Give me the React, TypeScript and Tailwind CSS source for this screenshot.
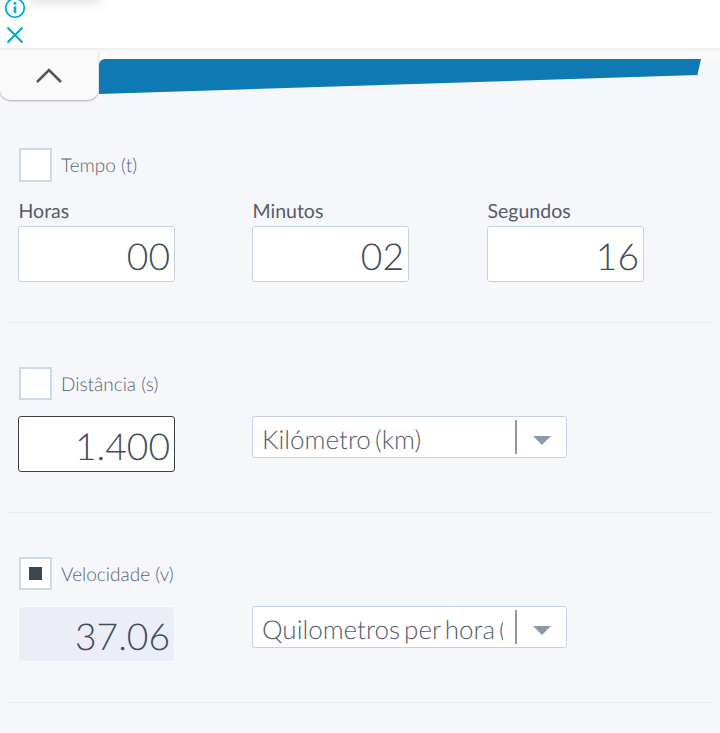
const FONT = "font-['Lato','Open_Sans',sans-serif] [text-rendering:geometricPrecision]";

const Check = ({ label, checked, className }: { label: string; checked?: boolean; className?: string }) => (
  <div className={`flex items-center ml-[19px] ${className}`}>
    <div className="w-[33px] h-full border-2 border-[#ced9e8] bg-white flex items-center justify-center">
      {checked && <div className="w-[13px] h-[13px] bg-[#3e4654]" />}
    </div>
    <span className="ml-[9px] pt-[3px] text-[19px] font-light text-[#5a6270]">{label}</span>
  </div>
);

const NumberBox = ({ value, className }: { value: string; className?: string }) => (
  <div
    className={`w-[157px] h-[56px] rounded-[3px] border flex items-center justify-end pt-[3px] pr-[4px] text-[37.2px] font-light text-[#444c5a] ${className}`}
  >
    {value}
  </div>
);

const Field = ({ label, value }: { label: string; value: string }) => (
  <div>
    <div className="h-[28px] pt-[1px] pl-[0.5px] text-[19.5px] leading-[26px] text-[#555c68]">{label}</div>
    <NumberBox value={value} className="bg-white border-[#c5d1e3]" />
  </div>
);

const Select = ({ text }: { text: string }) => (
  <div className="w-[315px] h-[42px] rounded-[3px] border border-[#c5d1e3] bg-white flex items-center pl-[9px]">
    <div className="w-[241px] pt-[5px] overflow-hidden whitespace-nowrap text-[26px] [word-spacing:-3px] font-light text-[#545c69]">{text}</div>
    <div className="ml-[12px] w-[2px] h-[34px] bg-[#8d99ab]" />
    <div className="ml-[16px] mt-[6px] w-0 h-0 border-x-[9px] border-x-transparent border-t-[9px] border-t-[#8d99ab]" />
  </div>
);

export default function App() {
  return (
    <div className={`${FONT} relative w-[720px] h-[733px] overflow-hidden bg-[#f5f7fb]`}>
      {/* ad bar */}
      <div className="relative h-[49px] bg-white border-b border-[#efefef] shadow-[0_1px_3px_rgba(0,0,0,0.05)]">
        <div className="absolute left-[30px] top-[-12px] w-[70px] h-[12px] shadow-[0_2px_12px_rgba(0,0,0,0.15)]" />
        <svg className="absolute left-[4px] top-[-3px]" width="22" height="22" viewBox="0 0 22 22" fill="none" stroke="#00aecd">
          <circle cx="11" cy="11" r="9.3" strokeWidth="1.8" />
          <path d="M11 9.5V16" strokeWidth="2.6" />
          <path d="M11 5V7.6" strokeWidth="2.6" />
        </svg>
        <svg className="absolute left-[6px] top-[26px]" width="18" height="18" viewBox="0 0 18 18" fill="none" stroke="#00aecd" strokeWidth="2.2">
          <path d="M1.5 1.5L16.5 16.5M16.5 1.5L1.5 16.5" />
        </svg>
      </div>

      {/* header strip and blue band */}
      <div className="h-[10px] bg-[#fafafa]" />
      <div className="h-[35px] ml-[99px] w-[602px] bg-[#0e79b2] rounded-tl-[6px] [clip-path:polygon(0_0,100%_0,99.4%_46%,0_100%)]" />
      <div className="absolute left-0 top-[50px] w-[98px] h-[50px] bg-[#fafafa] rounded-b-[10px] shadow-[0_1px_2px_rgba(0,0,0,0.3)] flex items-center justify-center">
        <svg width="28" height="18" viewBox="0 0 28 18" fill="none" stroke="#555555" strokeWidth="2.6">
          <path d="M2 16L14 4L26 16" />
        </svg>
      </div>

      <section className="pt-[54px] h-[228px]">
        <Check label="Tempo (t)" className="h-[34px]" />
        <div className="grid grid-cols-[234px_235px_157px] ml-[18px] mt-[16px]">
          <Field label="Horas" value="00" />
          <Field label="Minutos" value="02" />
          <Field label="Segundos" value="16" />
        </div>
      </section>
      <div className="mx-[8px] h-[1px] bg-[#e9ecf2]" />

      <section className="pt-[44px] h-[189px]">
        <Check label="Distância (s)" className="h-[33px]" />
        <div className="flex ml-[18px] mt-[16px]">
          <NumberBox value="1.400" className="bg-white border-[#3b3f46]" />
          <div className="ml-[77px]">
            <Select text="Kilómetro (km)" />
          </div>
        </div>
      </section>
      <div className="mx-[8px] h-[1px] bg-[#e9ecf2]" />

      <section className="pt-[44px] h-[189px]">
        <Check label="Velocidade (v)" checked className="h-[33px]" />
        <div className="flex ml-[18px] mt-[16px]">
          <NumberBox value="37.06" className="bg-[#ebeef6] border-[#fafbfd]" />
          <div className="ml-[77px]">
            <Select text="Quilometros per hora (km/h)" />
          </div>
        </div>
      </section>
      <div className="mx-[8px] h-[1px] bg-[#e9ecf2]" />
    </div>
  );
}
